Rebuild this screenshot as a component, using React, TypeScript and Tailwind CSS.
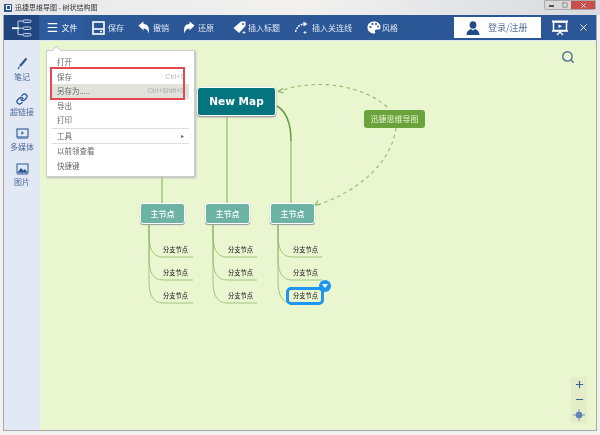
import { Menu, Search, X, Plus, Minus, Link, Square } from "lucide-react";

const TOOLS = [
  { label: "保存", w: "w-[46px]", icon: <SaveIcon /> },
  { label: "撤销", w: "w-[45px]", icon: <UndoIcon /> },
  { label: "还原", w: "w-[49px]", icon: <UndoIcon flip /> },
  { label: "插入标题", w: "w-[62px]", icon: <TagIcon /> },
  { label: "插入关连线", w: "w-[73px]", icon: <LineIcon /> },
  { label: "风格", w: "", icon: <PaletteIcon /> },
];

const SIDE = [
  { label: "笔记", icon: <PencilIcon /> },
  { label: "超链接", icon: <Link size={12} strokeWidth={2.6} /> },
  { label: "多媒体", icon: <MediaIcon /> },
  { label: "图片", icon: <PictureIcon /> },
];

const COLUMNS = [
  { left: 100, branch: 109 },
  { left: 165, branch: 173 },
  { left: 230, branch: 238 },
];
const ROWS = [216, 239, 262];

function SaveIcon() {
  return (
    <svg width="13" height="14" viewBox="0 0 13 14" fill="none" stroke="white" strokeWidth="1.6">
      <rect x="1" y="1" width="11" height="12" />
      <path d="M1 8h11" />
      <path d="M8 10.500h2" />
    </svg>
  );
}

function UndoIcon({ flip }: { flip?: boolean }) {
  return (
    <svg width="12" height="13" viewBox="0 0 12 13" fill="white" className={flip ? "-scale-x-100" : ""}>
      <path d="M0.500 4.500L5.500 0.500V3C9.500 3 12 6 10.500 12.500C10 9 8 7.500 5.500 7.500V9.500Z" />
    </svg>
  );
}

function TagIcon() {
  return (
    <svg width="15" height="15" viewBox="0 0 15 15" fill="white" className="-mr-[2px]">
      <path d="M9 1.500h4.500V6L7 13 1.500 8z" />
      <circle cx="11" cy="4" r="1" fill="#2b5797" />
      <path d="M12 11v3M10.500 12.500h3" stroke="white" strokeWidth="0.800" />
    </svg>
  );
}

function LineIcon() {
  return (
    <svg width="15" height="15" viewBox="0 0 15 15" fill="none" stroke="white" strokeWidth="1.400">
      <path d="M1.500 12C2.500 7.500 5.500 4.500 10 4" strokeDasharray="2 1" />
      <path d="M9.500 1.500L13.500 4 9.500 6.500z" fill="white" stroke="none" />
      <path d="M11 11v3M9.500 12.500h3" strokeWidth="0.800" />
    </svg>
  );
}

function PaletteIcon() {
  return (
    <svg width="14" height="13" viewBox="0 0 14 13" fill="white" className="-mr-[2px]">
      <path d="M7 0.500C3 0.500 0.500 3 0.500 6.500S3.500 12.500 7 12.500C8.500 12.500 8.500 11.500 8 10.500S8 8.500 10 8.500H12C13 8.500 13.500 7.500 13.500 6C13.500 3 11 0.500 7 0.500Z" />
      <circle cx="3.500" cy="6" r="1.100" fill="#2b5797" />
      <circle cx="5.500" cy="3" r="1.100" fill="#2b5797" />
      <circle cx="9" cy="3" r="1.100" fill="#2b5797" />
      <circle cx="11" cy="5.500" r="1" fill="#2b5797" />
    </svg>
  );
}

function PresentIcon() {
  return (
    <svg width="18" height="16" viewBox="0 0 18 16" fill="none" stroke="white" strokeWidth="1.500">
      <path d="M1 1.500h16" strokeWidth="2" />
      <rect x="2.500" y="2" width="13" height="8.500" />
      <path d="M7.500 4.500l3.500 1.800-3.500 1.800z" fill="white" stroke="none" />
      <path d="M1 11h16" strokeWidth="1.500" />
      <path d="M9 11v2M6 15l3-3 3 3" strokeWidth="1.300" />
    </svg>
  );
}

function UserIcon() {
  return (
    <svg width="14" height="14" viewBox="0 0 14 14" fill="#1f4a8c">
      <ellipse cx="7" cy="4" rx="3.400" ry="3.800" />
      <path d="M0.500 14C0.500 10.500 3 8.500 5 8L7 9.500 9 8C11 8.500 13.500 10.500 13.500 14Z" />
    </svg>
  );
}

function PencilIcon() {
  return (
    <svg width="13" height="13" viewBox="0 0 13 13" fill="none" stroke="#2b5797">
      <path d="M10.500 1.500L4 9" strokeWidth="2.200" />
      <path d="M3.500 9.500L2 12" strokeWidth="1.200" />
    </svg>
  );
}

function MediaIcon() {
  return (
    <svg width="13" height="11" viewBox="0 0 13 11" fill="none" stroke="#2b5797" strokeWidth="1.100">
      <rect x="1" y="1" width="11" height="8" />
      <path d="M1 10.300h11" strokeWidth="0.700" />
      <path d="M5.500 3.300l2.500 1.700-2.500 1.700z" fill="#2b5797" stroke="none" />
    </svg>
  );
}

function PictureIcon() {
  return (
    <svg width="13" height="12" viewBox="0 0 13 12" fill="none" stroke="#2b5797" strokeWidth="1">
      <rect x="1" y="1" width="11" height="9" />
      <path d="M1.500 9.500L5 5l2.500 2.500L9 6l2.500 3.500z" fill="#2b5797" stroke="none" />
      <path d="M1 11.300h11" strokeWidth="0.600" />
    </svg>
  );
}

function LogoIcon() {
  return (
    <svg width="22" height="20" viewBox="0 0 22 20" fill="none" stroke="#dfe7f2" strokeWidth="0.900">
      <rect x="12" y="2" width="8" height="2.500" rx="1.200" />
      <rect x="12" y="9" width="8" height="2.500" rx="1.200" />
      <rect x="12" y="15.500" width="8" height="2.500" rx="1.200" />
      <path d="M7 10V3.500C7 3 7.500 3 8 3h4M7 10v6c0 .500.500 .700 1 .700h4M8 10.200h4" />
      <path d="M1 10.200h7" stroke="white" strokeWidth="1.800" />
    </svg>
  );
}

function Connections() {
  return (
    <svg className="absolute inset-0" width="556" height="389" fill="none">
      <path d="M122 120V163" stroke="#86b35f" strokeWidth="1.100" />
      <path d="M187 74V163" stroke="#86b35f" strokeWidth="1.100" />
      <path d="M237 65C247 71 251 82 251 100" stroke="#6a9c3f" strokeWidth="1.500" />
      <path d="M251 100V163" stroke="#86b35f" strokeWidth="1.100" />
      {COLUMNS.map((c) => (
        <g key={c.left} stroke="#8dba6b" strokeWidth="0.800">
          {ROWS.map((y) => {
            const selected = c.left === 230 && y === 262;
            return (
              <path
                key={y}
                d={`M${c.branch} 182V${y - 22}C${c.branch} ${y - 8} ${c.branch + 4} ${y} ${c.branch + 14} ${y}H${selected ? c.branch + 16 : c.branch + 44}`}
              />
            );
          })}
        </g>
      ))}
      <path d="M347 66C325 46 280 36 240 50" stroke="#8dba6b" strokeWidth="1.100" strokeDasharray="3.500 3.500" />
      <path d="M238 50.500l5-3M238 50.500l5.500 1.500" stroke="#7fae5a" strokeWidth="1.100" />
      <path d="M356 87C352 120 320 150 277 164" stroke="#8dba6b" strokeWidth="1.100" strokeDasharray="3.500 3.500" />
      <path d="M275 164l5.500-.500M275 164l3-4.500" stroke="#7fae5a" strokeWidth="1.100" />
    </svg>
  );
}

export default function App() {
  return (
    <div className="relative w-[600px] h-[435px] overflow-hidden bg-[#f1f1f1] blur-[0.3px] flex flex-col font-['Noto_Sans_CJK_SC','Liberation_Sans',sans-serif] text-[#666]">
      {/* Title bar */}
      <div className="h-[15px] shrink-0 flex items-center gap-[3px] pl-[4px] bg-gradient-to-r from-[#e8e8ea] via-[#f2f1f0] to-[#d8dadf]">
        <div className="w-[8px] h-[8px] bg-[#2b5797] flex items-center justify-center">
          <div className="w-[5px] h-[5px] border border-white" />
        </div>
        <span className="text-[7px] leading-none text-[#333]">迅捷思维导图 - 树状结构图</span>
        <div className="ml-auto flex h-[10px] w-[52px] mr-[4px] -mt-[5px] border border-[#aaa] rounded-b-[2px]">
          <div className="flex-1 bg-[#d8d8d8] flex items-end justify-center pb-[2px]"><div className="w-[5px] h-[2px] bg-[#555]" /></div>
          <div className="flex-1 bg-[#d8d8d8] flex items-center justify-center"><Square size={6} strokeWidth={2} className="text-[#555]" /></div>
          <div className="w-[24px] bg-[#c9504a] flex items-center justify-center"><X size={7} strokeWidth={3} className="text-white" /></div>
        </div>
      </div>

      {/* Window content */}
      <div className="flex-1 min-h-0 ml-[3px] mr-[3px] mb-[4px] border-l border-r border-b border-[#a8a8a8] flex flex-col">
        {/* Toolbar */}
        <div className="h-[25px] shrink-0 bg-[#2b5797] flex items-stretch text-white">
          <div className="w-[35px] bg-[#1f4681] flex items-center justify-center"><LogoIcon /></div>
          <div className="w-[45px] bg-[#2d5a9d] flex items-center justify-center gap-[3px]">
            <Menu size={13} strokeWidth={2.2} />
            <span className="text-[8px]">文件</span>
          </div>
          <div className="flex items-center pl-[8px]">
            {TOOLS.map((t) => (
              <div key={t.label} className={`flex items-center gap-[3px] shrink-0 ${t.w}`}>
                {t.icon}
                <span className="text-[8px] text-[#dfe7f2] whitespace-nowrap">{t.label}</span>
              </div>
            ))}
          </div>
          <div className="ml-auto flex items-center">
            <div className="w-[87px] h-[21px] bg-white flex items-center gap-[8px] pl-[12px]">
              <UserIcon />
              <span className="text-[9px] text-[#54709d]">登录/注册</span>
            </div>
            <div className="w-[38px] flex items-center justify-center"><PresentIcon /></div>
            <div className="w-[17px] flex items-center"><X size={11} strokeWidth={2} className="-ml-[1px]" /></div>
          </div>
        </div>

        {/* Body */}
        <div className="flex-1 flex min-h-0 border-t border-[#dfe7f2]">
          <div className="w-[36px] shrink-0 bg-[#e2e8f4] flex flex-col items-center pt-[16px] gap-[10px] text-[#2b5797]">
            {SIDE.map((s) => (
              <div key={s.label} className="flex flex-col items-center gap-[2px]">
                <div className="h-[13px] flex items-center justify-center">{s.icon}</div>
                <span className="text-[8px] leading-[10px] text-[#4a6a96] whitespace-nowrap">{s.label}</span>
              </div>
            ))}
          </div>

          {/* Canvas */}
          <div className="relative flex-1 bg-[#eaf6cf]">
            <Connections />

            <div className="absolute left-[157px] top-[46px] w-[79px] h-[29px] rounded-[3px] bg-[#04757f] border border-white shadow-[0_1px_2px_#889] flex items-center justify-center text-white font-['DejaVu_Sans'] font-bold text-[10.5px]">New Map</div>

            <div className="absolute left-[324px] top-[69px] w-[61px] h-[18px] rounded-[3px] bg-[#6aa33e] flex items-center justify-center text-[8px] text-[#eaf6cf]">迅捷思维导图</div>

            {COLUMNS.map((c) => (
              <div key={c.left}>
                <div className="absolute top-[162px] w-[45px] h-[21px] rounded-[3px] bg-[#6cb3a5] border border-white shadow-[0_1px_1px_#999] flex items-center justify-center text-[8px] font-medium text-white" style={{ left: c.left }}>主节点</div>
                {ROWS.map((y) => (
                  <span key={y} className="absolute text-[6.25px] font-medium leading-[10px] text-[#333]" style={{ left: c.left + 23, top: y - 12 }}>分支节点</span>
                ))}
              </div>
            ))}

            {/* Selected branch */}
            <div className="absolute left-[246px] top-[246px] w-[38px] h-[18px] rounded-[5px] border-[3px] border-[#1e96f0]" />
            <div className="absolute left-[279px] top-[239px] w-[12px] h-[12px] rounded-full bg-[#1e96f0] flex items-center justify-center">
              <div className="w-0 h-0 border-l-[3px] border-r-[3px] border-t-[4px] border-l-transparent border-r-transparent border-t-white" />
            </div>

            <Search size={14} strokeWidth={2.4} className="absolute left-[521px] top-[9px] text-[#4a6f8f]" />

            {/* Zoom controls */}
            <div className="absolute left-[531px] top-[336px] w-[16px] h-[46px] bg-[#e4ecc8] rounded-[2px] flex flex-col items-center justify-around text-[#3a5f9a]">
              <Plus size={11} strokeWidth={2.4} />
              <Minus size={11} strokeWidth={2.4} />
              <svg width="12" height="12" viewBox="0 0 12 12" stroke="#5f86b8" fill="none">
                <circle cx="6" cy="6" r="3" fill="#5f86b8" />
                <path d="M6 0v12M0 6h12" strokeWidth="0.800" />
              </svg>
            </div>
          </div>
        </div>
      </div>

      {/* File menu */}
      <div className="absolute left-[46px] top-[50px] w-[149px] h-[127px] bg-white border border-[#ccc] shadow-[1px_1px_2px_#bbb] pt-[4px] text-[7.5px] leading-[14.5px] text-[#666]">
        <div className="absolute -top-[4px] left-[6px] w-[7px] h-[7px] rotate-45 bg-white border-l border-t border-[#ccc]" />
        <div className="px-[10px]">打开</div>
        <div className="pl-[10px] pr-[9px] flex justify-between"><span>保存</span><span className="text-[7px] text-[#bbb] font-['Liberation_Sans']">Ctrl+S</span></div>
        <div className="mx-[5px] pl-[5px] pr-[4px] flex justify-between bg-[#e2e2dc]"><span>另存为.....</span><span className="text-[7px] text-[#aaa] font-['Liberation_Sans']">Ctrl+Shift+S</span></div>
        <div className="px-[10px]">导出</div>
        <div className="px-[10px]">打印</div>
        <div className="border-t border-[#e0e0e0] mx-[5px]" />
        <div className="px-[10px] flex justify-between"><span>工具</span><span className="text-[6px]">▸</span></div>
        <div className="border-t border-[#e0e0e0] mx-[5px]" />
        <div className="px-[10px]">以前领查看</div>
        <div className="px-[10px]">快捷键</div>
      </div>

      {/* Red highlight */}
      <div className="absolute left-[50px] top-[67px] w-[135px] h-[33px] border-2 border-[#e2484e]" />
    </div>
  );
}
